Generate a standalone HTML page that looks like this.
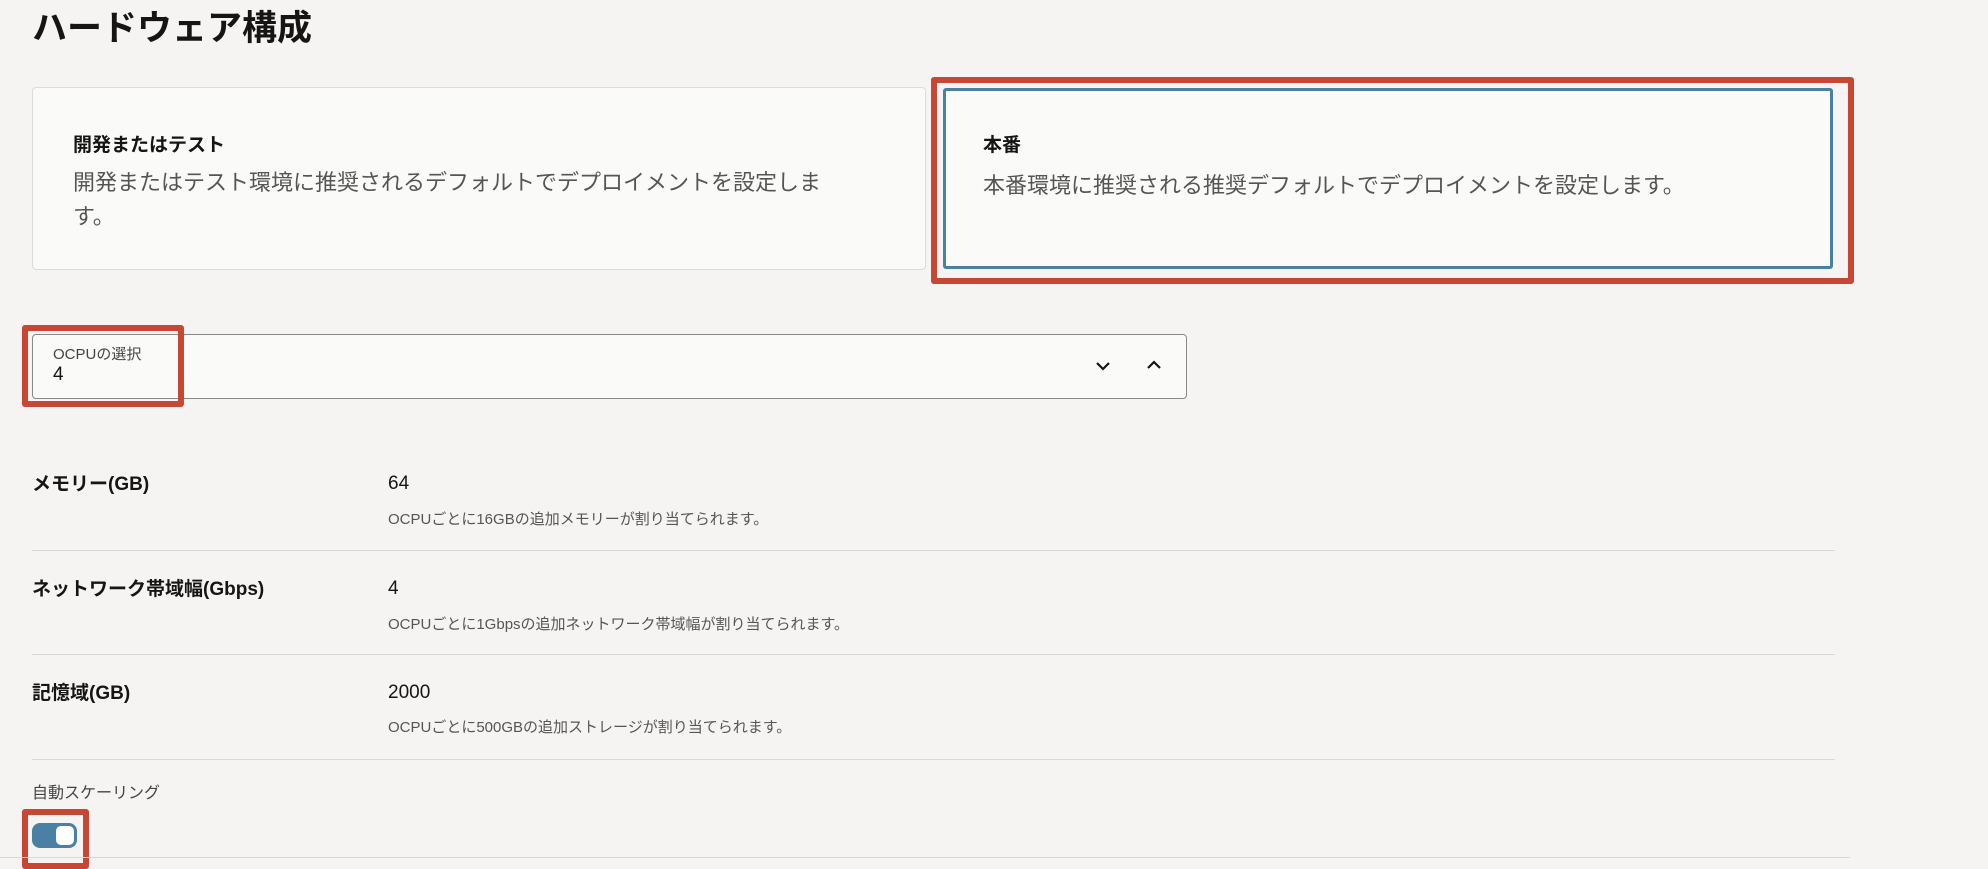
<!DOCTYPE html>
<html><head><meta charset="utf-8"><style>
*{margin:0;padding:0;box-sizing:border-box}
body{width:1988px;height:862px;background:#f5f4f2;font-family:"Liberation Sans","Noto Sans CJK JP",sans-serif;position:relative;overflow:hidden;color:#161513}
.a{position:absolute;white-space:nowrap}
.card{position:absolute;background:#fafaf9;border:1px solid #dcdbd8;border-radius:4px}
.red{position:absolute;border:6px solid #c74634;border-radius:3px}
.lbl{font-size:19px;font-weight:bold}
.val{font-size:19px}
.help{font-size:15px;color:#555}
.div{position:absolute;left:32px;width:1803px;height:1px;background:#d9d8d5}
</style></head><body>
<div class="a" style="left:32px;top:6px;font-size:35px;font-weight:bold;line-height:46px">ハードウェア構成</div>

<div class="card" style="left:32px;top:87px;width:894px;height:183px"></div>
<div class="a" style="left:73px;top:130px;font-size:19px;font-weight:bold">開発またはテスト</div>
<div class="a" style="left:73px;top:166px;font-size:22px;color:#555;line-height:34px;white-space:normal;width:775px">開発またはテスト環境に推奨されるデフォルトでデプロイメントを設定しま す。</div>

<div class="red" style="left:931px;top:77px;width:923px;height:207px"></div>
<div class="card" style="left:943px;top:88px;width:890px;height:181px;border:3px solid #4a80a3;border-radius:3px"></div>
<div class="a" style="left:983px;top:130px;font-size:19px;font-weight:bold">本番</div>
<div class="a" style="left:983px;top:168px;font-size:22px;color:#555">本番環境に推奨される推奨デフォルトでデプロイメントを設定します。</div>

<div class="card" style="left:32px;top:334px;width:1155px;height:65px;border-color:#8a8986"></div>
<div class="a" style="left:53px;top:343px;font-size:15px;color:#444">OCPUの選択</div>
<div class="a" style="left:53px;top:364px;font-size:19px">4</div>
<svg class="a" style="left:1095px;top:360px" width="16" height="12"><path d="M2 3 L8 9 L14 3" fill="none" stroke="#161513" stroke-width="2.2"/></svg>
<svg class="a" style="left:1146px;top:359px" width="16" height="12"><path d="M2 9 L8 3 L14 9" fill="none" stroke="#161513" stroke-width="2.2"/></svg>
<div class="red" style="left:22px;top:325px;width:162px;height:82px"></div>

<div class="a lbl" style="left:32px;top:469px">メモリー(GB)</div>
<div class="a val" style="left:388px;top:473px">64</div>
<div class="a help" style="left:388px;top:508px">OCPUごとに16GBの追加メモリーが割り当てられます。</div>
<div class="div" style="top:550px"></div>
<div class="a lbl" style="left:32px;top:574px">ネットワーク帯域幅(Gbps)</div>
<div class="a val" style="left:388px;top:578px">4</div>
<div class="a help" style="left:388px;top:613px">OCPUごとに1Gbpsの追加ネットワーク帯域幅が割り当てられます。</div>
<div class="div" style="top:654px"></div>
<div class="a lbl" style="left:32px;top:678px">記憶域(GB)</div>
<div class="a val" style="left:388px;top:682px">2000</div>
<div class="a help" style="left:388px;top:716px">OCPUごとに500GBの追加ストレージが割り当てられます。</div>
<div class="div" style="top:759px"></div>
<div class="a" style="left:32px;top:779px;font-size:16px;color:#444">自動スケーリング</div>
<div class="a" style="left:32px;top:823px;width:45px;height:25px;border-radius:8px;background:#4a80a3"></div>
<div class="a" style="left:56px;top:826px;width:18px;height:19px;border-radius:5px;background:#fff"></div>
<div class="red" style="left:22px;top:809px;width:67px;height:60px"></div>
<div class="div" style="top:857px;left:0;width:1850px"></div>
</body></html>
